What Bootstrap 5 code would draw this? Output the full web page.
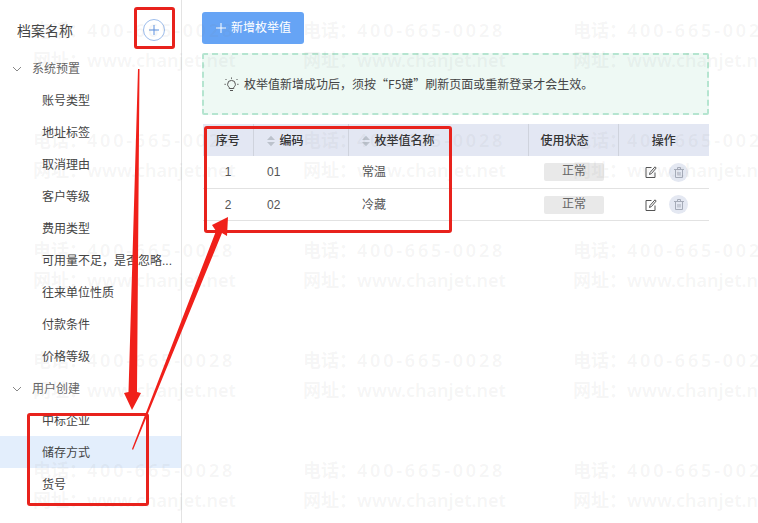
<!DOCTYPE html>
<html lang="zh">
<head>
<meta charset="utf-8">
<link href="https://cdn.jsdelivr.net/npm/bootstrap@5.3.0/dist/css/bootstrap.min.css" rel="stylesheet">
<style>
html,body{height:100%;overflow:hidden}
body{font-family:"Liberation Sans","Noto Sans CJK SC",sans-serif;font-size:12px;color:#444;background:#fff;position:relative}
.shell{width:758px;height:523px}
.side{width:182px;flex:none;border-right:1px solid #e3e3e3}
.side-head{height:52px;padding:10px 7px 0 17px;font-size:14px;color:#444}
.add-circle{width:24px;height:24px;margin-right:8px;color:#5b8fe0}
.group-head{height:32px;padding:2px 0 0 11px;color:#666}
.group-head svg{margin-right:9px}
.tree-item{height:32px;line-height:34px;padding-left:42px;color:#444;white-space:nowrap;overflow:hidden;text-overflow:ellipsis;padding-right:8px}
.tree-item.is-on{background:#e3eefc}
.main-pane{padding:12px 49px 0 20px;width:576px}
.add-btn{width:102px;height:32px;padding:0;background:#66a4f5;border:0;border-radius:3px;color:#fff;font-size:12px;--bs-btn-hover-bg:#66a4f5;--bs-btn-hover-color:#fff}
.tip-box{height:62px;margin-top:9px;background:#eef9f4;border:2px dashed #b5e5d0;border-radius:2px;padding-left:20px;color:#444;font-family:"Noto Sans CJK SC",sans-serif}
.tip-box svg{margin-right:5px}
.grid-tbl{width:506px;margin:9px 0 0 1px;table-layout:fixed;--bs-table-bg:transparent;color:#555;border-collapse:collapse}
.grid-tbl th{height:32px;padding:1px 0 0;background:#e3e7f3;font-weight:500;color:#333;font-size:12px;border:0;border-right:1px solid #cfd3dd;vertical-align:middle}
.grid-tbl th:last-child{border-right:0}
.grid-tbl td{height:32px;padding:1px 0 0;border:0;border-bottom:1px solid #e2e2e2;vertical-align:middle}
.sort-ico{margin-right:5px;vertical-align:-2px}
.th-pad{padding-left:13px!important}
.td-pad{padding-left:14px!important}
.state-head{padding-left:12px!important}
.state-tag{display:block;width:60px;height:18px;line-height:17px;margin-left:16px;background:#e9e9e9;border-radius:2px;color:#666;text-align:center}
.ops-cell{padding-left:27px}
.bin-ico{width:19px;height:19px;border-radius:50%;background:#e4e8f2;margin-left:12px;color:#a5abb8}
.wm-clip{position:absolute;left:0;top:0;width:758px;height:523px;pointer-events:none;overflow:hidden}
.wm-layer{display:grid;grid-template-columns:repeat(3,270px);grid-auto-rows:110px;margin-left:33px;width:810px}
.wm-cell{color:rgba(120,120,120,.075);font-weight:600;font-family:"Noto Sans","Noto Sans CJK SC",sans-serif;padding-top:15px;font-size:18px;line-height:30px;white-space:nowrap}
.wm-num{letter-spacing:2.800px}
.mark-layer{position:absolute;left:0;top:0;pointer-events:none}
</style>
</head>
<body>
<div class="shell d-flex">
  <aside class="side">
    <div class="side-head d-flex align-items-center justify-content-between">
      <span>档案名称</span>
      <span class="add-circle">
        <svg width="24" height="24" viewBox="0 0 24 24" fill="none" stroke="currentColor"><circle cx="12" cy="11" r="10.500" stroke="#9dbdec"/><path d="M12 6v10M7 11h10"/></svg>
      </span>
    </div>
    <div class="group-head d-flex align-items-center"><svg width="12" height="12" viewBox="0 0 12 12" fill="none" stroke="#888"><path d="M2 4l4 4 4-4"/></svg>系统预置</div>
    <div class="tree-item">账号类型</div>
    <div class="tree-item">地址标签</div>
    <div class="tree-item">取消理由</div>
    <div class="tree-item">客户等级</div>
    <div class="tree-item">费用类型</div>
    <div class="tree-item">可用量不足，是否忽略...</div>
    <div class="tree-item">往来单位性质</div>
    <div class="tree-item">付款条件</div>
    <div class="tree-item">价格等级</div>
    <div class="group-head d-flex align-items-center"><svg width="12" height="12" viewBox="0 0 12 12" fill="none" stroke="#888"><path d="M2 4l4 4 4-4"/></svg>用户创建</div>
    <div class="tree-item">中标企业</div>
    <div class="tree-item is-on">储存方式</div>
    <div class="tree-item">货号</div>
  </aside>
  <main class="main-pane">
    <button type="button" class="btn add-btn d-flex align-items-center justify-content-center">
      <svg width="12" height="12" viewBox="0 0 12 12" fill="none" stroke="#fff" class="me-1"><path d="M6 1v10M1 6h10"/></svg>新增枚举值
    </button>
    <div class="tip-box d-flex align-items-center">
      <svg width="15" height="15" viewBox="0 0 15 15" fill="none" stroke="#555"><path d="M5.200 10.200C4 9.400 3.600 8.300 3.600 7.300a3.900 3.900 0 0 1 7.800 0c0 1-.4 2.100-1.600 2.900v1.300H5.200zM6 13.500h3M7.500 .5v1.300M1.500 2l1 1M13.500 2l-1 1M.5 7.300h1.300M13.200 7.300h1.300"/></svg>
      枚举值新增成功后，须按“F5键”刷新页面或重新登录才会生效。
    </div>
    <table class="table grid-tbl mb-0">
      <colgroup><col style="width:50px"><col style="width:95px"><col style="width:180px"><col style="width:90px"><col style="width:91px"></colgroup>
      <thead>
        <tr>
          <th class="text-center">序号</th>
          <th class="th-pad"><svg class="sort-ico" width="8" height="12" viewBox="0 0 9 12" fill="#bcc2cc"><path d="M4.500 0L9 5H0zM0 7h9l-4.500 5z"/></svg>编码</th>
          <th class="th-pad"><svg class="sort-ico" width="8" height="12" viewBox="0 0 9 12" fill="#bcc2cc"><path d="M4.500 0L9 5H0zM0 7h9l-4.500 5z"/></svg>枚举值名称</th>
          <th class="state-head">使用状态</th>
          <th class="text-center">操作</th>
        </tr>
      </thead>
      <tbody>
        <tr>
          <td class="text-center">1</td><td class="td-pad">01</td><td class="td-pad">常温</td>
          <td><span class="state-tag">正常</span></td>
          <td><div class="d-flex align-items-center ops-cell">
            <svg width="12" height="12" viewBox="0 0 12 12" fill="none" stroke="#555"><path d="M10 6.500v5H1V1.500h5.500M4.500 8.500l.5-2L10 .8l1.200 1.200L6.500 7.500z"/></svg>
            <span class="bin-ico d-flex align-items-center justify-content-center"><svg width="10" height="11" viewBox="0 0 10 11" fill="none" stroke="currentColor"><path d="M0 2.500h10M3.500 2.500v-2h3v2M1.500 2.500v8h7v-8M4 5v3.500M6 5v3.500"/></svg></span>
          </div></td>
        </tr>
        <tr>
          <td class="text-center">2</td><td class="td-pad">02</td><td class="td-pad">冷藏</td>
          <td><span class="state-tag">正常</span></td>
          <td><div class="d-flex align-items-center ops-cell">
            <svg width="12" height="12" viewBox="0 0 12 12" fill="none" stroke="#555"><path d="M10 6.500v5H1V1.500h5.500M4.500 8.500l.5-2L10 .8l1.200 1.200L6.500 7.500z"/></svg>
            <span class="bin-ico d-flex align-items-center justify-content-center"><svg width="10" height="11" viewBox="0 0 10 11" fill="none" stroke="currentColor"><path d="M0 2.500h10M3.500 2.500v-2h3v2M1.500 2.500v8h7v-8M4 5v3.500M6 5v3.500"/></svg></span>
          </div></td>
        </tr>
      </tbody>
    </table>
  </main>
</div>
<div class="wm-clip">
  <div class="wm-layer">
    <div class="wm-cell">电话：<span class="wm-num">400-665-0028</span><br>网址：www.chanjet.net</div>
    <div class="wm-cell">电话：<span class="wm-num">400-665-0028</span><br>网址：www.chanjet.net</div>
    <div class="wm-cell">电话：<span class="wm-num">400-665-0028</span><br>网址：www.chanjet.net</div>
    <div class="wm-cell">电话：<span class="wm-num">400-665-0028</span><br>网址：www.chanjet.net</div>
    <div class="wm-cell">电话：<span class="wm-num">400-665-0028</span><br>网址：www.chanjet.net</div>
    <div class="wm-cell">电话：<span class="wm-num">400-665-0028</span><br>网址：www.chanjet.net</div>
    <div class="wm-cell">电话：<span class="wm-num">400-665-0028</span><br>网址：www.chanjet.net</div>
    <div class="wm-cell">电话：<span class="wm-num">400-665-0028</span><br>网址：www.chanjet.net</div>
    <div class="wm-cell">电话：<span class="wm-num">400-665-0028</span><br>网址：www.chanjet.net</div>
    <div class="wm-cell">电话：<span class="wm-num">400-665-0028</span><br>网址：www.chanjet.net</div>
    <div class="wm-cell">电话：<span class="wm-num">400-665-0028</span><br>网址：www.chanjet.net</div>
    <div class="wm-cell">电话：<span class="wm-num">400-665-0028</span><br>网址：www.chanjet.net</div>
    <div class="wm-cell">电话：<span class="wm-num">400-665-0028</span><br>网址：www.chanjet.net</div>
    <div class="wm-cell">电话：<span class="wm-num">400-665-0028</span><br>网址：www.chanjet.net</div>
    <div class="wm-cell">电话：<span class="wm-num">400-665-0028</span><br>网址：www.chanjet.net</div>
  </div>
</div>
<svg class="mark-layer" width="758" height="523" viewBox="0 0 758 523" fill="none">
  <g stroke="#e8221c" stroke-width="3"><rect x="135.500" y="8.500" width="38" height="39" rx="1.500"/><rect x="205.500" y="127.500" width="245" height="104" rx="1.500"/><rect x="28.500" y="414.500" width="119" height="90" rx="1.500"/></g>
  <path fill="#f0201a" d="M138 69L139.500 69L137 392L141 393L132 410L124 393L128.500 392Z"/>
  <path fill="#f0201a" d="M132 449L216 231L212 225L228 217L227 236L222 233L133 450Z"/>
</svg>
<script src="https://cdn.jsdelivr.net/npm/bootstrap@5.3.0/dist/js/bootstrap.bundle.min.js"></script>
</body>
</html>
